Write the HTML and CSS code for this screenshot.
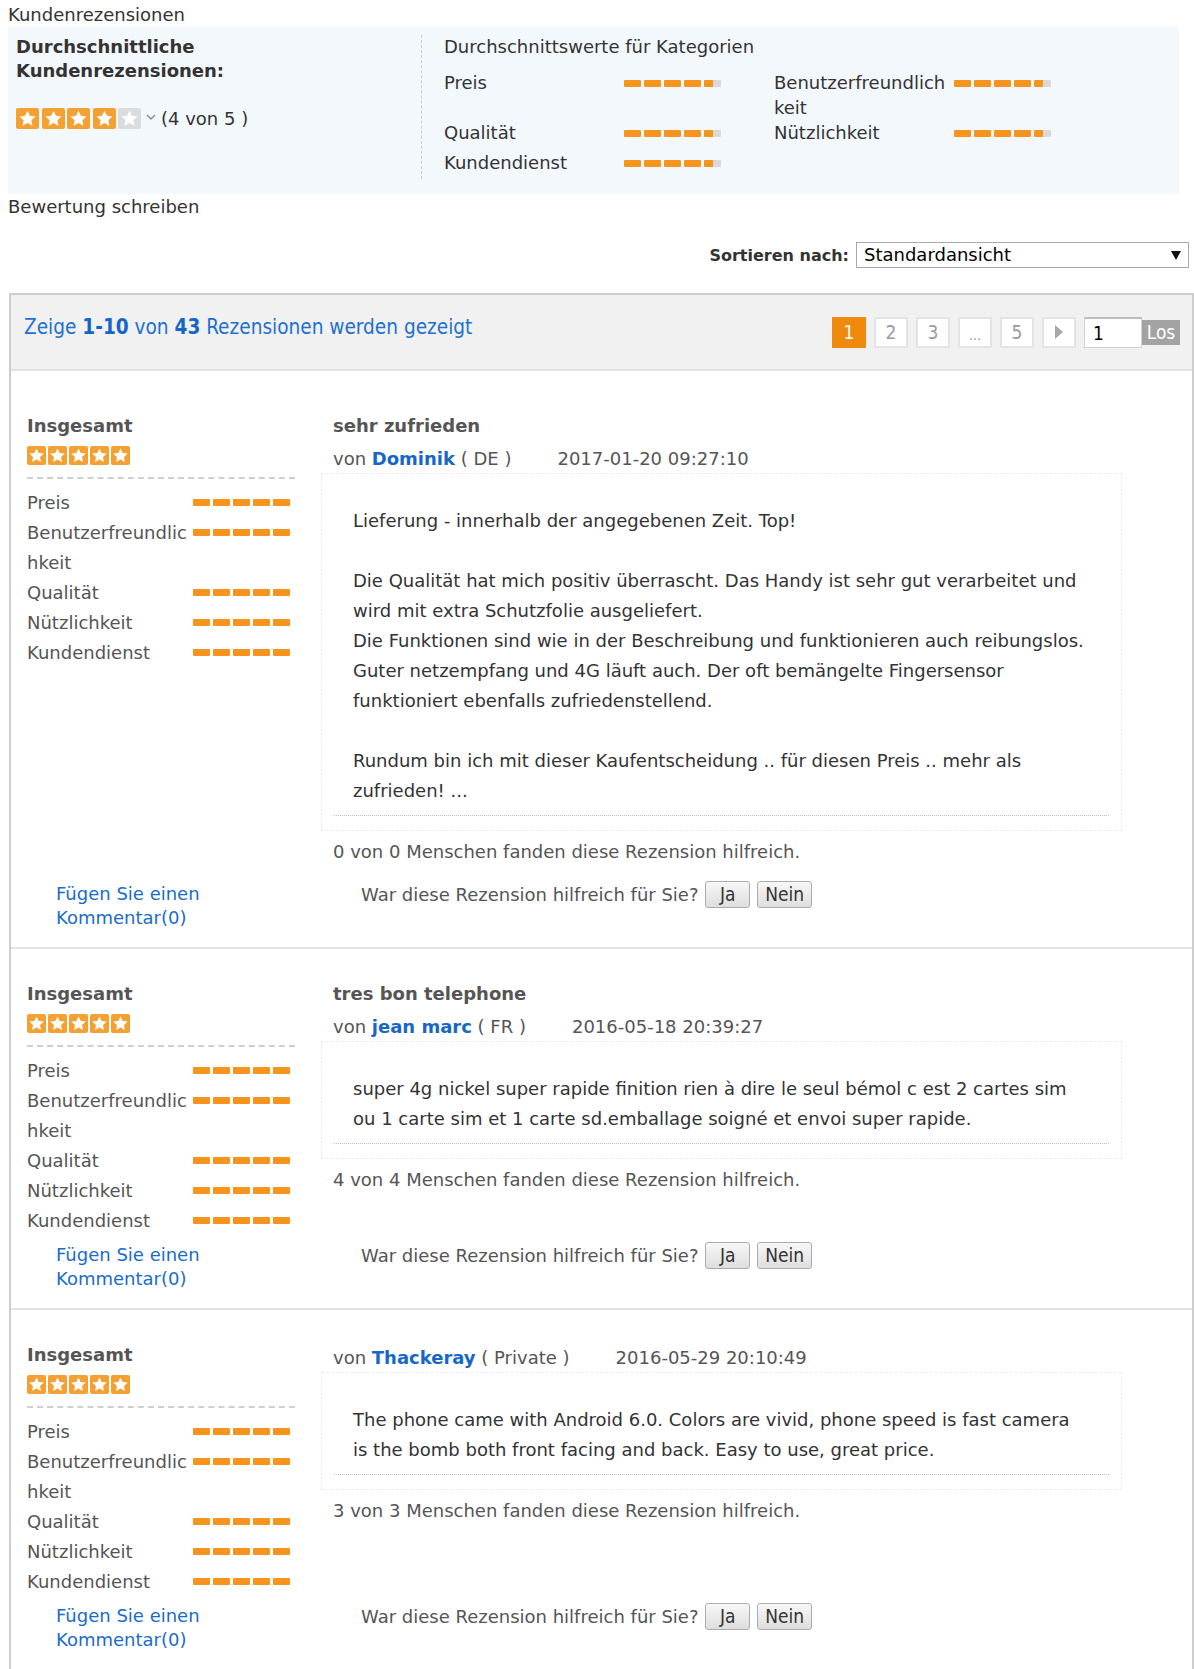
FILE: index.html
```html
<!DOCTYPE html>
<html lang="de">
<head>
<meta charset="utf-8">
<title>Kundenrezensionen</title>
<link rel="stylesheet" href="styles.css">
</head>
<body>
<svg class="defs" width="0" height="0" aria-hidden="true">
  <symbol id="star" viewBox="0 0 20 20">
    <polygon points="10,2.5 12.3,7.4 17.6,8 13.7,11.6 14.7,16.9 10,14.3 5.3,16.9 6.3,11.6 2.4,8 7.7,7.4" fill="#fff"/>
  </symbol>
</svg>
<div class="page">
  <div class="page-title">Kundenrezensionen</div>

  <div class="summary">
    <div class="summary-overall">
      <div class="summary-heading">Durchschnittliche<br>Kundenrezensionen:</div>
      <div class="summary-rating">
        <span class="stars stars-lg">
          <span class="star"><svg><use href="#star"/></svg></span>
          <span class="star"><svg><use href="#star"/></svg></span>
          <span class="star"><svg><use href="#star"/></svg></span>
          <span class="star"><svg><use href="#star"/></svg></span>
          <span class="star off"><svg><use href="#star"/></svg></span>
        </span>
        <svg class="chev" viewBox="0 0 10 8"><polyline points="1,2 5,6 9,2" fill="none" stroke="#888" stroke-width="1.3"/></svg>
        <span>(4 von 5 )</span>
      </div>
    </div>
    <div class="summary-cats">
      <div class="cats-title">Durchschnittswerte für Kategorien</div>
      <div class="cats-grid">
        <div class="cat"><span class="cat-label">Preis</span><span class="bar"><i></i><i></i><i></i><i></i><i class="half"></i></span></div>
        <div class="cat"><span class="cat-label">Benutzerfreundlichkeit</span><span class="bar"><i></i><i></i><i></i><i></i><i class="half"></i></span></div>
        <div class="cat"><span class="cat-label">Qualität</span><span class="bar"><i></i><i></i><i></i><i></i><i class="half"></i></span></div>
        <div class="cat"><span class="cat-label">Nützlichkeit</span><span class="bar"><i></i><i></i><i></i><i></i><i class="half"></i></span></div>
        <div class="cat"><span class="cat-label">Kundendienst</span><span class="bar"><i></i><i></i><i></i><i></i><i class="half"></i></span></div>
      </div>
    </div>
  </div>

  <div class="write">Bewertung schreiben</div>

  <div class="sort-row">
    <span class="sort-label">Sortieren nach:</span>
    <div class="select">Standardansicht<span class="caret"></span></div>
  </div>

  <div class="reviews">
    <div class="reviews-head">
      <div class="count">Zeige <b>1-10</b> von <b>43</b> Rezensionen werden gezeigt</div>
      <div class="pager">
        <span class="pg active">1</span>
        <span class="pg">2</span>
        <span class="pg">3</span>
        <span class="pg dots">...</span>
        <span class="pg">5</span>
        <span class="pg arrow"><svg viewBox="0 0 10 16"><polygon points="1,1 9,8 1,15" fill="#a8a8a8"/></svg></span>
        <span class="pg-input">1</span>
        <span class="pg-go">Los</span>
      </div>
    </div>

    <div class="review first">
      <div class="review-main">
        <div class="review-left">
          <div class="insg">Insgesamt</div>
          <span class="stars stars-sm">
            <span class="star"><svg><use href="#star"/></svg></span><span class="star"><svg><use href="#star"/></svg></span><span class="star"><svg><use href="#star"/></svg></span><span class="star"><svg><use href="#star"/></svg></span><span class="star"><svg><use href="#star"/></svg></span>
          </span>
          <div class="rates">
            <div class="rate-row"><span class="rate-label">Preis</span><span class="bar"><i></i><i></i><i></i><i></i><i></i></span></div>
            <div class="rate-row"><span class="rate-label">Benutzerfreundlichkeit</span><span class="bar"><i></i><i></i><i></i><i></i><i></i></span></div>
            <div class="rate-row"><span class="rate-label">Qualität</span><span class="bar"><i></i><i></i><i></i><i></i><i></i></span></div>
            <div class="rate-row"><span class="rate-label">Nützlichkeit</span><span class="bar"><i></i><i></i><i></i><i></i><i></i></span></div>
            <div class="rate-row"><span class="rate-label">Kundendienst</span><span class="bar"><i></i><i></i><i></i><i></i><i></i></span></div>
          </div>
        </div>
        <div class="review-right">
          <div class="review-title">sehr zufrieden</div>
          <div class="meta">von <a class="author" href="#">Dominik</a> ( DE )<span class="date">2017-01-20 09:27:10</span></div>
          <div class="body-box">
            <div class="body-text">Lieferung - innerhalb der angegebenen Zeit. Top!<br><br>Die Qualität hat mich positiv überrascht. Das Handy ist sehr gut verarbeitet und<br>wird mit extra Schutzfolie ausgeliefert.<br>Die Funktionen sind wie in der Beschreibung und funktionieren auch reibungslos.<br>Guter netzempfang und 4G läuft auch. Der oft bemängelte Fingersensor<br>funktioniert ebenfalls zufriedenstellend.<br><br>Rundum bin ich mit dieser Kaufentscheidung .. für diesen Preis .. mehr als<br>zufrieden! ...</div>
          </div>
          <div class="helpful">0 von 0 Menschen fanden diese Rezension hilfreich.</div>
        </div>
      </div>
      <div class="review-foot">
        <a class="comment-link" href="#">Fügen Sie einen Kommentar(0)</a>
        <div class="vote">War diese Rezension hilfreich für Sie? <button class="btn btn-ja">Ja</button><button class="btn btn-nein">Nein</button></div>
      </div>
    </div>

    <div class="review">
      <div class="review-main">
        <div class="review-left">
          <div class="insg">Insgesamt</div>
          <span class="stars stars-sm">
            <span class="star"><svg><use href="#star"/></svg></span><span class="star"><svg><use href="#star"/></svg></span><span class="star"><svg><use href="#star"/></svg></span><span class="star"><svg><use href="#star"/></svg></span><span class="star"><svg><use href="#star"/></svg></span>
          </span>
          <div class="rates">
            <div class="rate-row"><span class="rate-label">Preis</span><span class="bar"><i></i><i></i><i></i><i></i><i></i></span></div>
            <div class="rate-row"><span class="rate-label">Benutzerfreundlichkeit</span><span class="bar"><i></i><i></i><i></i><i></i><i></i></span></div>
            <div class="rate-row"><span class="rate-label">Qualität</span><span class="bar"><i></i><i></i><i></i><i></i><i></i></span></div>
            <div class="rate-row"><span class="rate-label">Nützlichkeit</span><span class="bar"><i></i><i></i><i></i><i></i><i></i></span></div>
            <div class="rate-row"><span class="rate-label">Kundendienst</span><span class="bar"><i></i><i></i><i></i><i></i><i></i></span></div>
          </div>
        </div>
        <div class="review-right">
          <div class="review-title">tres bon telephone</div>
          <div class="meta">von <a class="author" href="#">jean marc</a> ( FR )<span class="date">2016-05-18 20:39:27</span></div>
          <div class="body-box">
            <div class="body-text">super 4g nickel super rapide finition rien à dire le seul bémol c est 2 cartes sim<br>ou 1 carte sim et 1 carte sd.emballage soigné et envoi super rapide.</div>
          </div>
          <div class="helpful">4 von 4 Menschen fanden diese Rezension hilfreich.</div>
        </div>
      </div>
      <div class="review-foot">
        <a class="comment-link" href="#">Fügen Sie einen Kommentar(0)</a>
        <div class="vote">War diese Rezension hilfreich für Sie? <button class="btn btn-ja">Ja</button><button class="btn btn-nein">Nein</button></div>
      </div>
    </div>

    <div class="review">
      <div class="review-main">
        <div class="review-left">
          <div class="insg">Insgesamt</div>
          <span class="stars stars-sm">
            <span class="star"><svg><use href="#star"/></svg></span><span class="star"><svg><use href="#star"/></svg></span><span class="star"><svg><use href="#star"/></svg></span><span class="star"><svg><use href="#star"/></svg></span><span class="star"><svg><use href="#star"/></svg></span>
          </span>
          <div class="rates">
            <div class="rate-row"><span class="rate-label">Preis</span><span class="bar"><i></i><i></i><i></i><i></i><i></i></span></div>
            <div class="rate-row"><span class="rate-label">Benutzerfreundlichkeit</span><span class="bar"><i></i><i></i><i></i><i></i><i></i></span></div>
            <div class="rate-row"><span class="rate-label">Qualität</span><span class="bar"><i></i><i></i><i></i><i></i><i></i></span></div>
            <div class="rate-row"><span class="rate-label">Nützlichkeit</span><span class="bar"><i></i><i></i><i></i><i></i><i></i></span></div>
            <div class="rate-row"><span class="rate-label">Kundendienst</span><span class="bar"><i></i><i></i><i></i><i></i><i></i></span></div>
          </div>
        </div>
        <div class="review-right">
          <div class="meta">von <a class="author" href="#">Thackeray</a> ( Private )<span class="date">2016-05-29 20:10:49</span></div>
          <div class="body-box">
            <div class="body-text">The phone came with Android 6.0. Colors are vivid, phone speed is fast camera<br>is the bomb both front facing and back. Easy to use, great price.</div>
          </div>
          <div class="helpful">3 von 3 Menschen fanden diese Rezension hilfreich.</div>
        </div>
      </div>
      <div class="review-foot">
        <a class="comment-link" href="#">Fügen Sie einen Kommentar(0)</a>
        <div class="vote">War diese Rezension hilfreich für Sie? <button class="btn btn-ja">Ja</button><button class="btn btn-nein">Nein</button></div>
      </div>
    </div>
  </div>
</div>
</body>
</html>
```

FILE: styles.css
```css
* { box-sizing: border-box; }

body {
  margin: 0;
  font-family: "DejaVu Sans", Verdana, sans-serif;
  font-size: 18px;
  color: #333;
  background: #fff;
}

.defs { position: absolute; width: 0; height: 0; overflow: hidden; }

a { text-decoration: none; }

.page {
  padding: 3px 0 0 8px;
  width: 1194px;
}

.page-title { line-height: 24px; }

/* ---------- summary box ---------- */
.summary {
  display: flex;
  width: 1171px;
  height: 167px;
  background: #f3f8fd;
  padding: 8px 0 0 8px;
}

.summary-overall {
  width: 406px;
  height: 144px;
  border-right: 1px dashed #c9c9c9;
}

.summary-heading {
  font-weight: bold;
  line-height: 24px;
}

.summary-rating {
  display: flex;
  align-items: center;
  margin-top: 25px;
}

.stars { display: inline-flex; }

.star {
  display: inline-flex;
  background: #f5a033;
  border-radius: 2px;
}
.star svg { width: 100%; height: 100%; }
.star.off { background: #dcdcdc; }

.stars-lg { gap: 2.5px; }
.stars-lg .star { width: 23px; height: 21px; }

.chev { width: 10px; height: 8px; margin: 0 5px 4px 5px; }

.summary-cats { padding-left: 22px; }

.cats-title { line-height: 24px; }

.cats-grid {
  display: grid;
  grid-template-columns: 330px 330px;
  grid-template-rows: 50px 30px 25px;
  margin-top: 11px;
}

.cat { display: flex; align-items: flex-start; }

.cat-label {
  width: 180px;
  line-height: 25px;
  word-break: break-all;
}

.bar {
  display: inline-flex;
  gap: 3px;
  margin-top: 10px;
}
.bar i {
  display: block;
  width: 17px;
  height: 7px;
  background: #f7941d;
  border-radius: 1px;
}
.bar i.half { background: linear-gradient(to right, #f7941d 50%, #d9d9d9 50%); }

/* ---------- write + sort ---------- */
.write { line-height: 24px; margin-top: 1px; }

.sort-row {
  display: flex;
  justify-content: flex-end;
  align-items: center;
  width: 1181px;
  margin-top: 23px;
}

.sort-label {
  font-weight: bold;
  font-size: 16px;
  margin-right: 7px;
}

.select {
  position: relative;
  width: 333px;
  height: 26px;
  border: 1px solid #a9a9a9;
  padding-left: 7px;
  line-height: 24px;
  color: #000;
}

.caret {
  position: absolute;
  right: 7px;
  top: 8px;
  width: 0;
  height: 0;
  border-left: 5px solid transparent;
  border-right: 5px solid transparent;
  border-top: 9px solid #111;
}

/* ---------- reviews container ---------- */
.reviews {
  width: 1185px;
  margin: 25px 0 0 1px;
  border: 2px solid #cdcdcd;
  border-bottom: none;
}

.reviews-head {
  display: flex;
  justify-content: space-between;
  align-items: center;
  height: 76px;
  background: #f1f1f1;
  border-bottom: 2px solid #e2e2e2;
  padding: 0 12px 0 13px;
}

.count {
  font-family: "DejaVu Sans Condensed", "DejaVu Sans", sans-serif;
  font-stretch: condensed;
  font-size: 20.6px;
  color: #1f70d0;
  margin-bottom: 10px;
}
.count b { color: #1565c8; }

.pager {
  display: flex;
  align-items: center;
  gap: 8px;
  font-family: "DejaVu Sans Condensed", "DejaVu Sans", sans-serif;
  font-stretch: condensed;
  font-size: 19px;
}

.pg {
  display: flex;
  align-items: center;
  justify-content: center;
  width: 34px;
  height: 31px;
  background: #fff;
  border: 2px solid #e4e4e4;
  color: #9a9a9a;
}
.pg.active { background: #f08a0c; border-color: #f08a0c; color: #fff; }
.pg.dots { font-size: 14px; padding-top: 6px; }
.pg.arrow svg { width: 10px; height: 16px; }

.pg-input {
  width: 58px;
  height: 31px;
  background: #fff;
  border: 1px solid #d0d0d0;
  border-top: 2px solid #bdbdbd;
  padding-left: 8px;
  line-height: 28px;
  color: #000;
  margin-right: -8px;
}

.pg-go {
  width: 38px;
  height: 25px;
  background: #a3a3a3;
  color: #fff;
  line-height: 25px;
  text-align: center;
}

/* ---------- review ---------- */
.review {
  padding: 30px 0 17px 16px;
  border-bottom: 2px solid #e3e3e3;
}
.review.first { padding-top: 40px; }

.review-main {
  display: flex;
  align-items: flex-start;
}

.review-left {
  width: 268px;
  margin-bottom: 7px;
  color: #555;
}

.insg {
  font-weight: bold;
  line-height: 30px;
}

.stars-sm { gap: 2px; margin-top: 5px; vertical-align: top; }
.stars-sm .star { width: 19px; height: 19px; }

.rates {
  margin-top: 12px;
  padding-top: 9px;
  border-top: 2px dashed #cfcfcf;
}

.rate-row { display: flex; align-items: flex-start; }

.rate-label {
  width: 166px;
  line-height: 30px;
  word-break: break-all;
}

.rate-row .bar { margin-top: 11px; }
.rate-row .bar i { width: 17px; }

.review-right {
  width: 801px;
  margin-left: 26px;
  margin-bottom: 15px;
  color: #555;
}

.review-title {
  font-weight: bold;
  line-height: 30px;
  padding-left: 12px;
}

.meta {
  line-height: 28px;
  padding: 4px 0 0 12px;
}

.author { color: #1767c9; font-weight: bold; }

.date { margin-left: 46px; }

.body-box {
  border: 1px dashed #ececec;
  padding: 32px 12px 14px;
}

.body-text {
  padding: 0 6px 9px 19px;
  border-bottom: 1px dotted #bdbdbd;
  line-height: 30px;
  color: #333;
  white-space: nowrap;
}

.helpful {
  margin-top: 6px;
  line-height: 30px;
  padding-left: 12px;
}

.review-foot {
  display: flex;
  align-items: flex-start;
  line-height: 24px;
}

.comment-link {
  width: 294px;
  padding-left: 29px;
  color: #1a6ccc;
  display: block;
}

.vote {
  padding-left: 40px;
  color: #555;
  display: flex;
  align-items: center;
  white-space: pre;
}

.btn {
  height: 27px;
  margin-top: -1px;
  padding: 0;
  border: 1px solid #acacac;
  border-radius: 3px;
  background: linear-gradient(#f7f7f7, #dedede);
  font-family: "DejaVu Sans Condensed", "DejaVu Sans", sans-serif;
  font-stretch: condensed;
  font-size: 19px;
  color: #333;
  line-height: 25px;
}
.btn-ja { width: 45px; margin-left: 1px; }
.btn-nein { width: 55px; margin-left: 7px; }
```
